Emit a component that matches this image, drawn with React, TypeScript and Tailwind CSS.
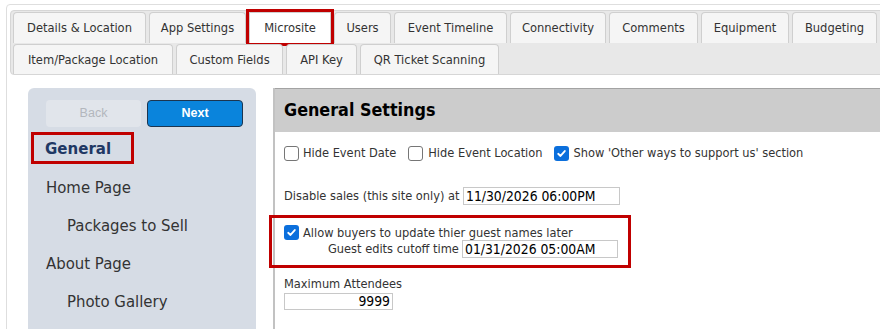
import React from "react";

const row1 = [
  { label: "Details & Location", w: "w-[133px]" },
  { label: "App Settings", w: "w-[97px]" },
  { label: "Microsite", w: "w-[82px]", active: true },
  { label: "Users", w: "w-[57px]" },
  { label: "Event Timeline", w: "w-[113px]" },
  { label: "Connectivity", w: "w-[96px]" },
  { label: "Comments", w: "w-[89px]" },
  { label: "Equipment", w: "w-[88px]" },
  { label: "Budgeting", w: "w-[85px]" },
];

const row2 = [
  { label: "Item/Package Location", w: "w-[160px]" },
  { label: "Custom Fields", w: "w-[107px]" },
  { label: "API Key", w: "w-[71px]" },
  { label: "QR Ticket Scanning", w: "w-[139px]" },
];

function Tab({ label, w, active, h }: { label: string; w: string; active?: boolean; h: string }) {
  return (
    <div
      className={
        "shrink-0 flex items-center justify-center border border-b-0 border-[#cfcfcf] text-[12.8px] text-[#333] " +
        w +
        " " +
        h +
        (active
          ? " rounded-none bg-white outline-[3px] outline-solid outline-[#c00000]"
          : " rounded-t-[4px] bg-[#f5f5f5]")
      }
    >
      {label}
    </div>
  );
}

function Box({ checked }: { checked?: boolean }) {
  return checked ? (
    <span className="inline-flex w-[15px] h-[15px] shrink-0 items-center justify-center rounded-[3px] bg-[#0b6fdc]">
      <svg viewBox="0 0 12 12" className="w-[11px] h-[11px]">
        <path d="M2.4 6.3 L4.9 8.7 L9.6 3.3" stroke="white" strokeWidth="2" fill="none" strokeLinecap="round" strokeLinejoin="round" />
      </svg>
    </span>
  ) : (
    <span className="inline-block w-[15px] h-[15px] shrink-0 rounded-[3px] border border-[#767676] bg-white" />
  );
}

export default function App() {
  return (
    <div
      className="w-[880px] h-[329px] overflow-hidden bg-white"
      style={{ fontFamily: '"DejaVu Sans Condensed", "DejaVu Sans", sans-serif' }}
    >
      <div className="ml-[6px] mt-[4px] w-[900px] h-[400px] border border-[#dedede] rounded-tl-[4px] pl-[3px] pt-[5px]">
        {/* tab bar */}
        <div className="h-[65px] bg-[#e8e8e8] border border-[#d6d6d6] rounded-[4px] pl-[2px] pt-[1px]">
          <div className="flex gap-[3px]">
            {row1.map((t) => (
              <Tab key={t.label} label={t.label} w={t.w} active={t.active} h="h-[31px]" />
            ))}
          </div>
          <div className="flex gap-[3px] mt-[1px]">
            {row2.map((t) => (
              <Tab key={t.label} label={t.label} w={t.w} h="h-[30px]" />
            ))}
          </div>
        </div>

        {/* content */}
        <div className="flex mt-[13px] pl-[18px]">
          {/* sidebar */}
          <div className="w-[228px] h-[260px] shrink-0 bg-[#d6dce5] rounded-t-[6px] pt-[12px] pl-[18px]">
            <div className="flex gap-[6px] font-['Liberation_Sans',sans-serif] text-[12.5px]">
              <div className="w-[95px] h-[27px] rounded-[4px] bg-[#e1e5eb] flex items-center justify-center text-[#b3b7bd]">
                Back
              </div>
              <div className="w-[96px] h-[27px] rounded-[4px] bg-[#0a84dc] border border-[#1c3550] flex items-center justify-center font-bold text-white">
                Next
              </div>
            </div>
            <div className="mt-[5px] ml-[-15px] w-[103px] h-[32px] border-[3px] border-[#c00000] flex items-center pl-[11px] pt-[2px] text-[16.7px] font-bold text-[#1f3864]">
              General
            </div>
            <div className="mt-[5px] text-[16.6px] text-[#333]">
              <div className="h-[38px] flex items-center">Home Page</div>
              <div className="h-[38px] flex items-center pl-[21px]">Packages to Sell</div>
              <div className="h-[38px] flex items-center">About Page</div>
              <div className="h-[38px] flex items-center pl-[21px]">Photo Gallery</div>
            </div>
          </div>

          {/* main panel */}
          <div className="ml-[17px] w-[640px] h-[260px] border-l-2 border-[#c2c2c2]">
            <div className="h-[44px] bg-[#cccccc] border-t border-[#a3a3a3] flex items-center pl-[9px] text-[17.8px] font-bold text-black">
              General Settings
            </div>
            <div className="pl-[9px] text-[12.7px] text-[#333]">
              <div className="mt-[11px] h-[20px] flex items-center whitespace-nowrap">
                <Box />
                <span className="ml-[4px]">Hide Event Date</span>
                <span className="ml-[12px] flex">
                  <Box />
                </span>
                <span className="ml-[5px]">Hide Event Location</span>
                <span className="ml-[11px] flex">
                  <Box checked />
                </span>
                <span className="ml-[5px]">Show 'Other ways to support us' section</span>
              </div>

              <div className="mt-[24px] h-[18px] flex items-center whitespace-nowrap">
                <span className="w-[179px] shrink-0">Disable sales (this site only) at</span>
                <input
                  readOnly
                  value="11/30/2026 06:00PM"
                  className="w-[157px] h-[18px] border border-[#c8c8c8] pl-[2px] text-[13.8px] text-black outline-none"
                />
              </div>

              <div className="mt-[10px] ml-[-15px] w-[362px] h-[53px] border-[3px] border-[#c00000] pl-[12px] pt-[7px] whitespace-nowrap">
                <div className="h-[15px] flex items-center">
                  <Box checked />
                  <span className="ml-[4px]">Allow buyers to update thier guest names later</span>
                </div>
                <div className="h-[18px] flex items-center pl-[44px]">
                  <span className="w-[134px] shrink-0">Guest edits cutoff time</span>
                  <input
                    readOnly
                    value="01/31/2026 05:00AM"
                    className="w-[156px] h-[18px] border border-[#c8c8c8] pl-[2px] text-[13.8px] text-black outline-none"
                  />
                </div>
              </div>

              <div className="mt-[8px] h-[16px] flex items-center">Maximum Attendees</div>
              <input
                readOnly
                value="9999"
                className="mt-[1px] w-[109px] h-[17px] border border-[#c8c8c8] pr-[2px] text-right text-[13.8px] text-black outline-none"
              />
            </div>
          </div>
        </div>
      </div>
    </div>
  );
}
